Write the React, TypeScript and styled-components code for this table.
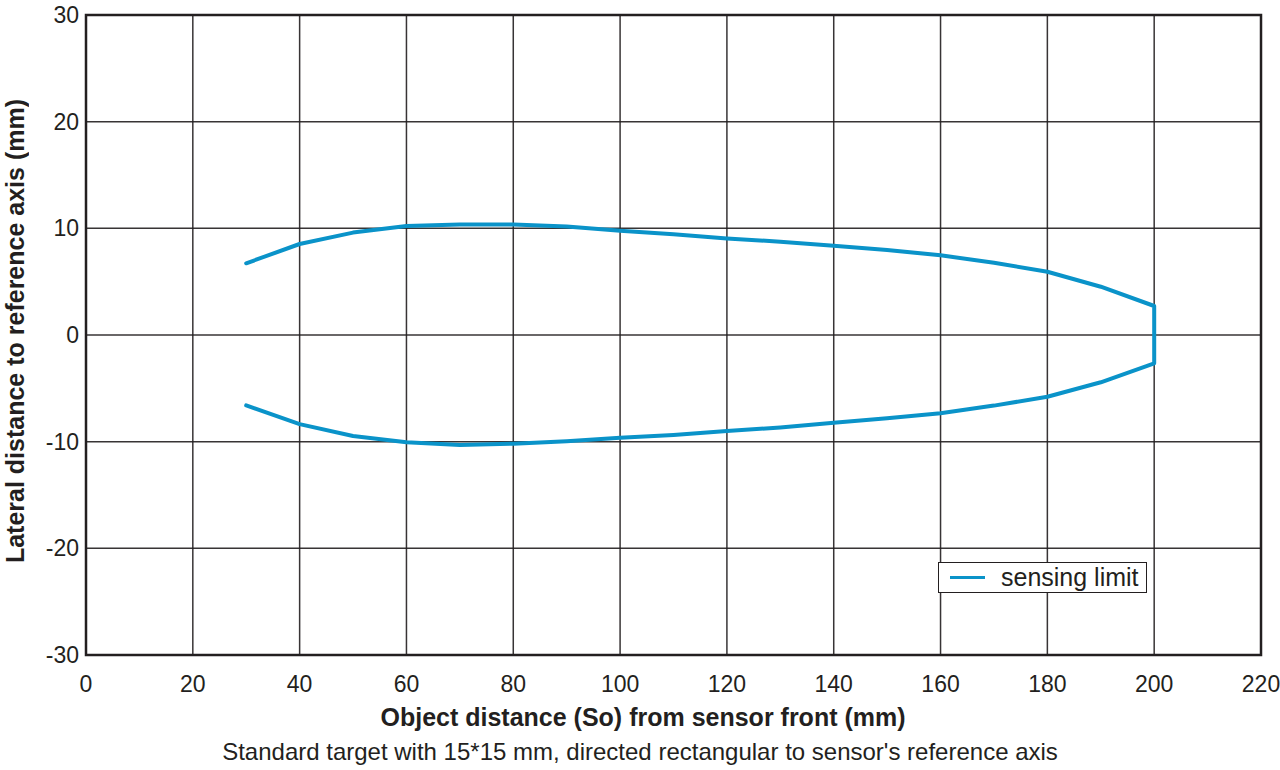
import { FC } from "react";
import styled, { createGlobalStyle } from "styled-components";

const GlobalStyle = createGlobalStyle`
    html, body {
        margin: 0;
        padding: 0;
        background: #ffffff;
    }
    body {
        font-family: "Liberation Sans", Arial, sans-serif;
        color: #231f20;
    }
`

const INK = "#231f20";
const LINE = "#0a93c9";

// plot frame, in page pixels
const LEFT = 86;
const RIGHT = 1261;
const TOP = 15;
const BOTTOM = 655;

const sx = (v: number) => LEFT + (v * (RIGHT - LEFT)) / 220;
const sy = (v: number) => TOP + ((30 - v) * (BOTTOM - TOP)) / 60;

const upper: [number, number][] = [
    [30, 6.72], [40, 8.53], [50, 9.6], [60, 10.22], [70, 10.37], [80, 10.37],
    [90, 10.16], [100, 9.78], [110, 9.44], [120, 9.06], [130, 8.75], [140, 8.37],
    [150, 7.97], [160, 7.47], [170, 6.78], [180, 5.93], [190, 4.53], [200, 2.72],
];

const lower: [number, number][] = [
    [30, -6.6], [40, -8.35], [50, -9.47], [60, -10.06], [70, -10.3], [80, -10.19],
    [90, -9.97], [100, -9.64], [110, -9.37], [120, -9.0], [130, -8.66], [140, -8.22],
    [150, -7.81], [160, -7.34], [170, -6.62], [180, -5.78], [190, -4.43], [200, -2.65],
];

const xTicks = Array.from({ length: 12 }, (_, i) => i * 20);
const yTicks = [30, 20, 10, 0, -10, -20, -30];

const Figure = styled.div`
    display: grid;
    grid-template-columns: 30px 1250px;
    grid-template-rows: 700px auto auto;
    width: 1280px;
    height: 770px;
    overflow: hidden;
`

const YTitleCell = styled.div`
    height: 662px;
    display: flex;
    align-items: center;
    justify-content: center;
`

const YTitle = styled.div`
    writing-mode: vertical-rl;
    transform: rotate(180deg);
    font-weight: bold;
    font-size: 25px;
    white-space: nowrap;
    color: ${INK};
`

const ChartCell = styled.div`
    position: relative;
`

const Legend = styled.div`
    position: absolute;
    left: 908px;
    top: 562px;
    width: 209px;
    height: 31px;
    box-sizing: border-box;
    border: 1.5px solid ${INK};
    background: #ffffff;
    display: flex;
    align-items: center;
    gap: 16px;
    padding-left: 11px;
`

const Swatch = styled.span`
    display: block;
    width: 35px;
    height: 3px;
    background: ${LINE};
`

const LegendText = styled.span`
    font-size: 25px;
    line-height: 1;
    color: ${INK};
`

const XTitle = styled.div`
    grid-column: 1 / span 2;
    padding-left: 6px;
    text-align: center;
    font-weight: bold;
    font-size: 25px;
    line-height: 34px;
    color: ${INK};
`

const Caption = styled.div`
    grid-column: 1 / span 2;
    text-align: center;
    font-size: 24px;
    line-height: 36px;
    color: ${INK};
`

const toPoints = (pts: [number, number][]) =>
    pts.map(([x, y]) => `${sx(x).toFixed(1)},${sy(y).toFixed(1)}`).join(" ");

const Chart: FC = () => {
    const outline = [...upper, ...[...lower].reverse()];

    return (
        <svg width={1250} height={700} viewBox="30 0 1250 700" style={{ display: "block" }}>
            {xTicks.slice(1, -1).map(t => (
                <line key={`gx${t}`} x1={sx(t)} x2={sx(t)} y1={TOP} y2={BOTTOM} stroke={INK} strokeWidth={1.5} opacity={0.9} />
            ))}
            {yTicks.slice(1, -1).map(t => (
                <line key={`gy${t}`} x1={LEFT} x2={RIGHT} y1={sy(t)} y2={sy(t)} stroke={INK} strokeWidth={1.5} opacity={0.9} />
            ))}
            <rect x={LEFT} y={TOP} width={RIGHT - LEFT} height={BOTTOM - TOP} fill="none" stroke={INK} strokeWidth={2.5} />

            <polyline points={toPoints(outline)} fill="none" stroke={LINE} strokeWidth={4} strokeLinejoin="round" strokeLinecap="round" />

            {yTicks.map(t => (
                <text key={`ty${t}`} x={79} y={sy(t) + 8} textAnchor="end" fontSize={23} fill={INK} fontFamily="Liberation Sans, Arial, sans-serif">
                    {t}
                </text>
            ))}
            {xTicks.map(t => (
                <text key={`tx${t}`} x={sx(t)} y={692} textAnchor="middle" fontSize={23} fill={INK} fontFamily="Liberation Sans, Arial, sans-serif">
                    {t}
                </text>
            ))}
        </svg>
    );
}

const App: FC = () => {
    return (
        <>
            <GlobalStyle />
            <Figure>
                <YTitleCell>
                    <YTitle>Lateral distance to reference axis (mm)</YTitle>
                </YTitleCell>
                <ChartCell>
                    <Chart />
                    <Legend>
                        <Swatch />
                        <LegendText>sensing limit</LegendText>
                    </Legend>
                </ChartCell>
                <XTitle>Object distance (So) from sensor front (mm)</XTitle>
                <Caption>Standard target with 15*15 mm, directed rectangular to sensor's reference axis</Caption>
            </Figure>
        </>
    );
}

export default App;
